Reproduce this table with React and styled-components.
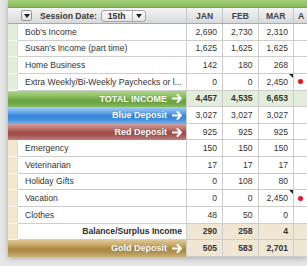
import React from 'react';
import styled, { createGlobalStyle, css } from 'styled-components';

const GlobalStyle = createGlobalStyle`
    html, body {
        margin: 0;
        padding: 0;
        background: #e6e6e6;
        overflow: hidden;
    }
    body {
        font-family: "Liberation Sans", Arial, sans-serif;
        font-size: 8.6px;
        color: #333;
    }
`;

const COLS = '10px 168px 36px 35.5px 35.5px 1fr';
const ROW_H = '16.64px';

const bands = {
    green: 'linear-gradient(to bottom, #add689 0%, #8fc266 30%, #70aa46 52%, #69a240 70%, #84ba5f 100%)',
    blue: 'linear-gradient(to bottom, #a6cdf3 0%, #6aaaec 30%, #3583d9 52%, #3f8bdc 70%, #78b1ea 100%)',
    red: 'linear-gradient(to bottom, #d39f9c 0%, #ba716e 30%, #a04c49 52%, #a45350 70%, #c07f7c 100%)',
    gold: 'linear-gradient(to bottom, #dec897 0%, #c6a764 30%, #aa873f 52%, #b08e4b 70%, #ccb078 100%)',
};

const valueBg = {
    total: '#e2eed9',
    tan: '#efe7d3',
    plain: '#fff',
};

const stripBg = {
    income: '#e0eedb',
    expense: '#f1e8cf',
    none: 'transparent',
};

const Page = styled.div`
    width: 307px;
    height: 266px;
    padding-left: 8px;
    box-sizing: border-box;
    overflow: hidden;
`;

const Card = styled.div`
    background: #fff;
    box-shadow: 0 1px 6px rgba(0, 0, 0, 0.28);
`;

const TopBar = styled.div`
    height: 8px;
    background: linear-gradient(to bottom, #a6d07c, #86b95a);
    border-bottom: 1px solid #78a84f;
    box-sizing: border-box;
`;

const Row = styled.div`
    display: grid;
    grid-template-columns: ${COLS};
    height: ${ROW_H};
    box-sizing: border-box;
    border-bottom: 1px solid #cdcdcd;
`;

const HeaderRow = styled(Row)`
    height: 16px;
    background: linear-gradient(to bottom, #f4f4f4, #d7dadc);
    border-bottom: 1px solid #a7a9ab;
`;

const SessionCell = styled.div`
    grid-column: span 2;
    display: flex;
    align-items: center;
    padding-left: 13px;
    gap: 8px;
`;

const DropButton = styled.div`
    width: 11px;
    height: 11px;
    box-sizing: border-box;
    border: 1px solid #9a9a9a;
    border-radius: 2px;
    background: linear-gradient(to bottom, #ffffff, #dcdcdc);
    display: flex;
    align-items: center;
    justify-content: center;
`;

const Triangle = styled.span`
    width: 0;
    height: 0;
    border-left: 3px solid transparent;
    border-right: 3px solid transparent;
    border-top: 4px solid #222;
`;

const SessionLabel = styled.span`
    font-weight: bold;
    color: #3a3a3a;
`;

const Select = styled.div`
    display: flex;
    align-items: center;
    height: 12px;
    margin-left: -4px;
    box-sizing: border-box;
    border: 1px solid #a5a5a5;
    border-radius: 3px;
    background: linear-gradient(to bottom, #ffffff, #e4e4e4);
    font-weight: bold;
    color: #333;
`;

const SelectText = styled.span`
    padding: 0 6px;
    border-right: 1px solid #b5b5b5;
    line-height: 10px;
`;

const SelectArrow = styled.span`
    display: flex;
    align-items: center;
    padding: 0 3px;
`;

const MonthHead = styled.div`
    display: flex;
    align-items: center;
    justify-content: ${p => (p.$clip ? 'flex-start' : 'center')};
    padding-left: ${p => (p.$clip ? '4px' : '0')};
    font-weight: bold;
    color: #444;
    border-left: 1px solid #c2c4c6;
`;

const Strip = styled.div`
    background: ${p => stripBg[p.$kind]};
    border-right: 1px solid #dcdcdc;
    margin-bottom: -1px;
    border-bottom: 1px solid rgba(255, 255, 255, 0.7);
`;

const Label = styled.div`
    display: flex;
    align-items: center;
    padding-left: 7px;
    white-space: nowrap;
    overflow: hidden;
    ${p => p.$summary && css`
        justify-content: flex-end;
        padding: 0 4px 0 0;
        font-weight: bold;
        color: #2e2e2e;
    `}
`;

const Band = styled.div`
    grid-column: span 2;
    display: flex;
    align-items: center;
    justify-content: flex-end;
    gap: 5px;
    padding-right: 3px;
    margin-bottom: -1px;
    background: ${p => bands[p.$color]};
    color: #fff;
    font-weight: bold;
    font-size: 9px;
    text-shadow: 0 0 1px rgba(0, 0, 0, 0.25);
`;

const Value = styled.div`
    position: relative;
    display: flex;
    align-items: center;
    justify-content: flex-end;
    padding-right: 5px;
    border-left: 1px solid #cdcdcd;
    background: ${p => valueBg[p.$bg]};
    font-weight: ${p => (p.$bold ? 'bold' : 'normal')};
    color: #333;
`;

const Note = styled.span`
    position: absolute;
    top: 0;
    right: 0;
    width: 0;
    height: 0;
    border-left: 4px solid transparent;
    border-top: 4px solid #222;
`;

const Extra = styled.div`
    display: flex;
    align-items: center;
    padding-left: 4px;
    border-left: 1px solid #cdcdcd;
    background: ${p => valueBg[p.$bg]};
`;

const Dot = styled.span`
    width: 5px;
    height: 5px;
    border-radius: 50%;
    background: #e8141c;
`;

const Arrow = () => (
    <svg width="11" height="9" viewBox="0 0 11 9">
        <path d="M0.5 4.5 H9 M5.5 1 L9 4.5 L5.5 8" fill="none" stroke="#fff" strokeWidth="2" strokeLinecap="round" strokeLinejoin="round" />
    </svg>
);

const rows = [
    { kind: 'income', label: "Bob's Income", v: ['2,690', '2,730', '2,310'] },
    { kind: 'income', label: "Susan's Income (part time)", v: ['1,625', '1,625', '1,625'] },
    { kind: 'income', label: 'Home Business', v: ['142', '180', '268'] },
    { kind: 'income', label: 'Extra Weekly/Bi-Weekly Paychecks or l...', v: ['0', '0', '2,450'], note: true },
    { band: 'green', label: 'TOTAL INCOME', v: ['4,457', '4,535', '6,653'], bg: 'total', bold: true },
    { band: 'blue', label: 'Blue Deposit', v: ['3,027', '3,027', '3,027'] },
    { band: 'red', label: 'Red Deposit', v: ['925', '925', '925'] },
    { kind: 'expense', label: 'Emergency', v: ['150', '150', '150'] },
    { kind: 'expense', label: 'Veterinarian', v: ['17', '17', '17'] },
    { kind: 'expense', label: 'Holiday Gifts', v: ['0', '108', '80'] },
    { kind: 'expense', label: 'Vacation', v: ['0', '0', '2,450'], note: true },
    { kind: 'expense', label: 'Clothes', v: ['48', '50', '0'] },
    { kind: 'expense', summary: true, label: 'Balance/Surplus Income', v: ['290', '258', '4'], bg: 'tan', bold: true },
    { band: 'gold', label: 'Gold Deposit', v: ['505', '583', '2,701'], bg: 'tan', bold: true },
];

const App = () => (
    <Page>
        <GlobalStyle />
        <Card>
            <TopBar />
            <HeaderRow>
                <SessionCell>
                    <DropButton><Triangle /></DropButton>
                    <SessionLabel>Session Date:</SessionLabel>
                    <Select>
                        <SelectText>15th</SelectText>
                        <SelectArrow><Triangle /></SelectArrow>
                    </Select>
                </SessionCell>
                <MonthHead>JAN</MonthHead>
                <MonthHead>FEB</MonthHead>
                <MonthHead>MAR</MonthHead>
                <MonthHead $clip>A</MonthHead>
            </HeaderRow>
            {rows.map(r => (
                <Row key={r.label}>
                    {r.band ? (
                        <Band $color={r.band}>
                            {r.label}
                            <Arrow />
                        </Band>
                    ) : (
                        <>
                            <Strip $kind={r.kind} />
                            <Label $summary={r.summary}>{r.label}</Label>
                        </>
                    )}
                    {r.v.map((val, i) => (
                        <Value key={i} $bg={r.bg || 'plain'} $bold={r.bold}>
                            {val}
                            {r.note && i === 2 && <Note />}
                        </Value>
                    ))}
                    <Extra $bg={r.bg || 'plain'}>{r.note && <Dot />}</Extra>
                </Row>
            ))}
        </Card>
    </Page>
);

export default App;
